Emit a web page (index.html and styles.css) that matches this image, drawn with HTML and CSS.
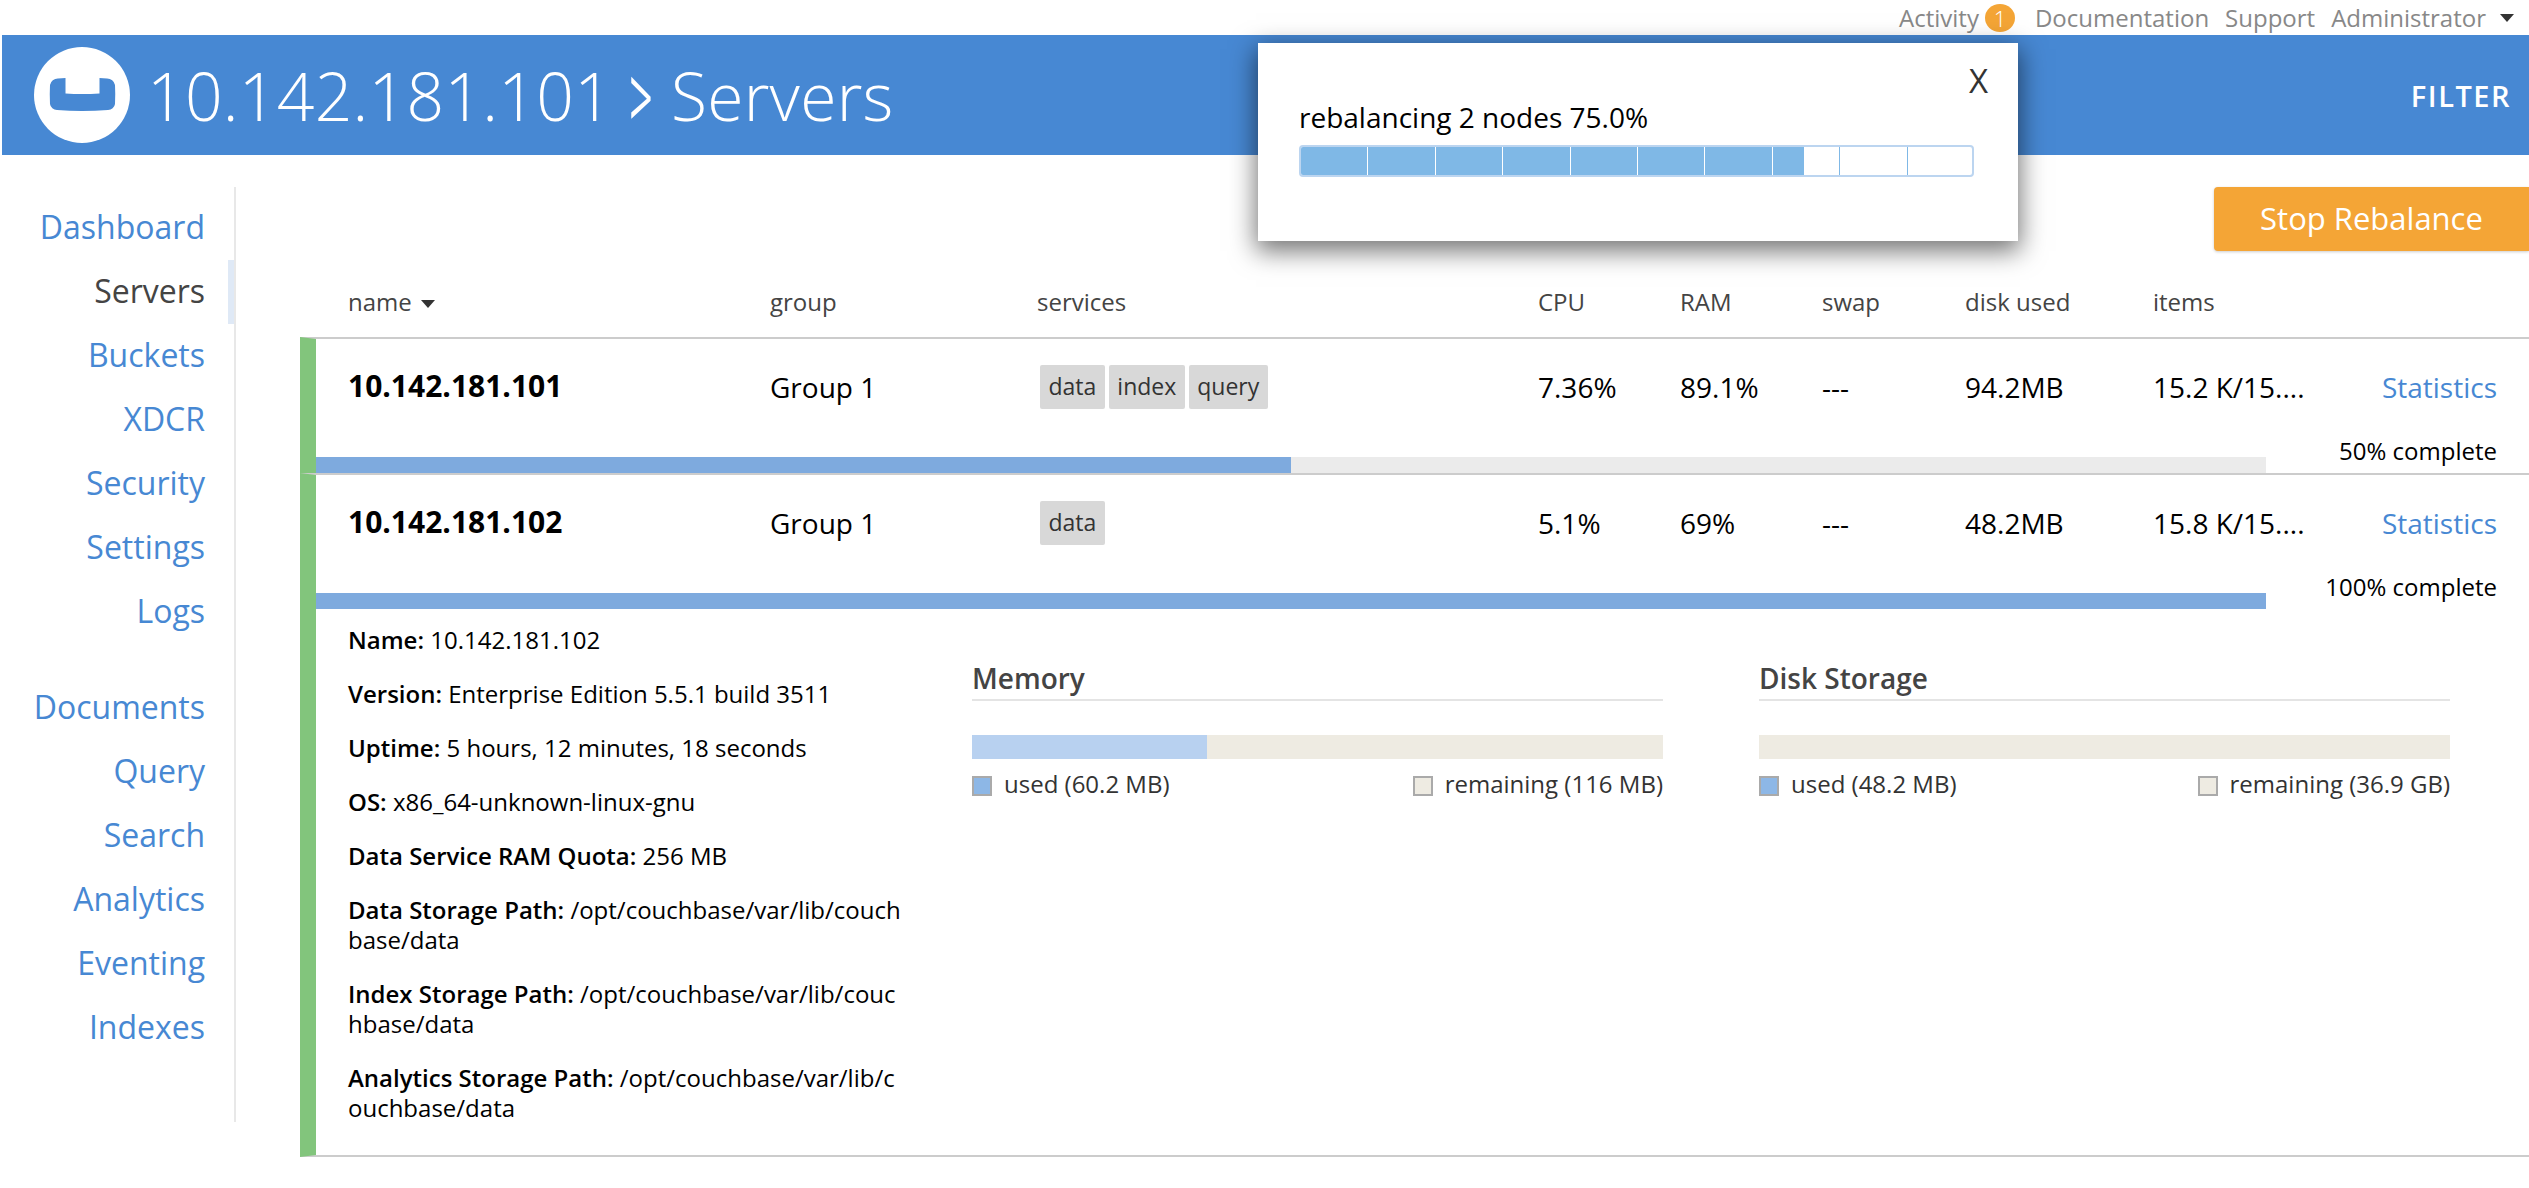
FILE: index.html
```html
<!DOCTYPE html>
<html lang="en">
<head>
    <meta charset="UTF-8">
    <meta name="viewport" content="width=device-width, initial-scale=1.0">
    <title>Servers</title>
    <link rel="stylesheet" href="styles.css">
</head>
<body>
    <div class="topbar">
        <span class="topbar-link">Activity</span>
        <span class="badge">1</span>
        <span class="topbar-link doc-link">Documentation</span>
        <span class="topbar-link">Support</span>
        <span class="topbar-link">Administrator</span>
        <span class="caret caret-top"></span>
    </div>

    <header class="header">
        <div class="logo">
            <svg width="67" height="34" viewBox="-1 0 67 34">
                <path fill="#4788d3" d="M8 .5Q12 0 15.5 0V15.6Q32 16.6 49.5 15.6V0Q53 0 57 .5A8 8 0 0 1 65 7Q65.5 16 65 26A7 7 0 0 1 58 32Q32 34 7 32A7 7 0 0 1 0 26Q-.5 16 0 7A8 8 0 0 1 8 .5Z"/>
            </svg>
        </div>
        <h1 class="title">10.142.181.101 <span class="crumb-sep">&gt;</span> Servers</h1>
        <span class="filter">FILTER</span>
    </header>

    <div class="page">
        <nav class="sidebar">
            <a class="nav-item">Dashboard</a>
            <a class="nav-item active">Servers</a>
            <a class="nav-item">Buckets</a>
            <a class="nav-item">XDCR</a>
            <a class="nav-item">Security</a>
            <a class="nav-item">Settings</a>
            <a class="nav-item">Logs</a>
            <a class="nav-item nav-group">Documents</a>
            <a class="nav-item">Query</a>
            <a class="nav-item">Search</a>
            <a class="nav-item">Analytics</a>
            <a class="nav-item">Eventing</a>
            <a class="nav-item">Indexes</a>
        </nav>

        <main class="main">
            <div class="toolbar">
                <button class="stop-btn">Stop Rebalance</button>
            </div>

            <div class="columns table-head">
                <span>name <span class="caret caret-sort"></span></span>
                <span>group</span>
                <span>services</span>
                <span>CPU</span>
                <span>RAM</span>
                <span>swap</span>
                <span>disk used</span>
                <span>items</span>
            </div>

            <section class="server">
                <div class="columns server-row">
                    <strong class="server-name">10.142.181.101</strong>
                    <span>Group 1</span>
                    <span class="tags"><span class="tag">data</span><span class="tag">index</span><span class="tag">query</span></span>
                    <span>7.36%</span>
                    <span>89.1%</span>
                    <span>---</span>
                    <span>94.2MB</span>
                    <span>15.2 K/15....</span>
                    <a class="stats-link">Statistics</a>
                </div>
                <div class="progress-row">
                    <div class="progress"><div class="progress-fill" style="width: 50%"></div></div>
                    <span class="progress-label">50% complete</span>
                </div>
            </section>

            <section class="server server-last">
                <div class="columns server-row">
                    <strong class="server-name">10.142.181.102</strong>
                    <span>Group 1</span>
                    <span class="tags"><span class="tag">data</span></span>
                    <span>5.1%</span>
                    <span>69%</span>
                    <span>---</span>
                    <span>48.2MB</span>
                    <span>15.8 K/15....</span>
                    <a class="stats-link">Statistics</a>
                </div>
                <div class="progress-row">
                    <div class="progress"><div class="progress-fill" style="width: 100%"></div></div>
                    <span class="progress-label">100% complete</span>
                </div>

                <div class="details">
                    <div class="info">
                        <p><b>Name:</b> 10.142.181.102</p>
                        <p><b>Version:</b> Enterprise Edition 5.5.1 build 3511</p>
                        <p><b>Uptime:</b> 5 hours, 12 minutes, 18 seconds</p>
                        <p><b>OS:</b> x86_64-unknown-linux-gnu</p>
                        <p><b>Data Service RAM Quota:</b> 256 MB</p>
                        <p><b>Data Storage Path:</b> /opt/couchbase/var/lib/couchbase/data</p>
                        <p><b>Index Storage Path:</b> /opt/couchbase/var/lib/couchbase/data</p>
                        <p><b>Analytics Storage Path:</b> /opt/couchbase/var/lib/couchbase/data</p>
                    </div>

                    <div class="usage usage-memory">
                        <h3 class="usage-title">Memory</h3>
                        <div class="usage-bar"><div class="usage-fill" style="width: 34%"></div></div>
                        <div class="legend">
                            <span><i class="swatch swatch-used"></i>used (60.2 MB)</span>
                            <span><i class="swatch swatch-free"></i>remaining (116 MB)</span>
                        </div>
                    </div>

                    <div class="usage usage-disk">
                        <h3 class="usage-title">Disk Storage</h3>
                        <div class="usage-bar"></div>
                        <div class="legend">
                            <span><i class="swatch swatch-used"></i>used (48.2 MB)</span>
                            <span><i class="swatch swatch-free"></i>remaining (36.9 GB)</span>
                        </div>
                    </div>
                </div>
            </section>
        </main>
    </div>

    <div class="rebalance-popup">
        <span class="popup-close">X</span>
        <div class="popup-text">rebalancing 2 nodes 75.0%</div>
        <div class="popup-bar">
            <div class="popup-fill" style="width: 75%"></div>
        </div>
    </div>
</body>
</html>
```

FILE: styles.css
```css
* {
    box-sizing: border-box;
}
body {
    margin: 0;
    font-family: "Open Sans", "DejaVu Sans", sans-serif;
    font-size: 24px;
    color: #000;
    background-color: #fff;
    overflow: hidden;
}

/* top links */
.topbar {
    height: 35px;
    display: flex;
    align-items: center;
    justify-content: flex-end;
    padding-right: 15px;
    color: #888;
    font-size: 24px;
}
.topbar-link {
    margin-left: 16px;
}
.doc-link {
    margin-left: 20px;
}
.badge {
    width: 30px;
    height: 28px;
    margin-left: 6px;
    border-radius: 50%;
    background-color: #f4a536;
    color: #fff;
    font-size: 22px;
    font-weight: 300;
    line-height: 28px;
    text-align: center;
}
.caret {
    display: inline-block;
    width: 0;
    height: 0;
    border-left: 7px solid transparent;
    border-right: 7px solid transparent;
    border-top: 8px solid #333;
}
.caret-top {
    margin-left: 14px;
}
.caret-sort {
    margin-left: 3px;
    vertical-align: 3px;
}

/* blue header */
.header {
    height: 120px;
    margin-left: 2px;
    padding: 0 18px 0 32px;
    display: flex;
    align-items: center;
    background-color: #4788d3;
    color: #fff;
}
.logo {
    width: 96px;
    height: 96px;
    border-radius: 50%;
    background-color: #fff;
    display: flex;
    align-items: center;
    justify-content: center;
    flex-shrink: 0;
}
.title {
    margin: 0 0 0 17px;
    font-size: 66px;
    font-weight: 300;
    letter-spacing: 0.25px;
    flex: 1;
}
.crumb-sep {
    display: inline-block;
    margin: 0 -7px;
    font-weight: 400;
    transform: scale(0.62, 1.3);
}
.filter {
    font-size: 29px;
    font-weight: 600;
    letter-spacing: 1.5px;
}

/* layout */
.page {
    display: flex;
}
.sidebar {
    width: 236px;
    height: 935px;
    margin-top: 32px;
    padding-top: 9px;
    border-right: 2px solid #e8e8e8;
    flex-shrink: 0;
}
.nav-item {
    display: block;
    height: 64px;
    line-height: 62px;
    padding-right: 29px;
    text-align: right;
    font-size: 32px;
    color: #4788d3;
}
.nav-item.active {
    color: #444;
    padding-right: 23px;
    border-right: 6px solid #dfe9f6;
}
.nav-group {
    margin-top: 32px;
}
.main {
    flex: 1;
    min-width: 0;
    padding-left: 64px;
}
.toolbar {
    display: flex;
    justify-content: flex-end;
    padding-top: 32px;
}
.stop-btn {
    width: 315px;
    height: 64px;
    padding: 0 0 3px;
    border: none;
    border-radius: 4px 0 0 4px;
    background-color: #f4a536;
    color: #fff;
    font-family: inherit;
    font-size: 31px;
    box-shadow: 0 1px 3px rgba(0, 0, 0, 0.2);
}

/* server table */
.columns {
    display: grid;
    grid-template-columns: 422px 267px 501px 142px 142px 143px 188px 210px 1fr;
    align-items: center;
    padding: 0 32px 0 48px;
}
.table-head {
    height: 86px;
    padding-top: 14px;
    color: #444;
    font-size: 24px;
}
.server {
    border-top: 2px solid #ccc;
    border-left: 16px solid #82c57c;
}
.server-last {
    border-bottom: 2px solid #ccc;
}
.server-row {
    height: 96px;
    padding-left: 32px;
    font-size: 28px;
}
.server-name {
    padding-bottom: 3px;
    font-size: 30px;
    font-weight: 700;
}
.tags {
    display: flex;
    gap: 4px;
    padding-left: 3px;
}
.tag {
    height: 44px;
    padding: 0 8.5px;
    border-radius: 2px;
    background-color: #d8d8d8;
    color: #333;
    font-size: 23px;
    line-height: 42px;
}
.stats-link {
    color: #4788d3;
    font-size: 28px;
    text-align: right;
    white-space: nowrap;
}
.progress-row {
    height: 38px;
    display: flex;
    justify-content: space-between;
    align-items: flex-end;
    padding-right: 32px;
}
.progress {
    width: 1950px;
    height: 16px;
    background-color: #ebebeb;
}
.progress-fill {
    height: 100%;
    background-color: #7eaade;
}
.progress-label {
    line-height: 34px;
    margin-bottom: 5px;
    font-size: 24px;
}

/* expanded server */
.details {
    display: flex;
    padding: 16px 0 8px 32px;
}
.info {
    width: 556px;
    flex-shrink: 0;
    word-break: break-all;
    font-size: 24px;
    line-height: 30px;
}
.info p {
    margin: 0 0 24px;
}
.info b {
    font-weight: 600;
}
.usage {
    width: 691px;
    flex-shrink: 0;
    padding-top: 32px;
}
.usage-memory {
    margin-left: 68px;
}
.usage-disk {
    margin-left: 96px;
}
.usage-title {
    margin: 0;
    height: 44px;
    border-bottom: 2px solid #e4e4e4;
    color: #444;
    font-size: 28px;
    font-weight: 600;
    line-height: 42px;
}
.usage-bar {
    height: 24px;
    margin-top: 34px;
    background-color: #eeebe2;
}
.usage-fill {
    height: 100%;
    background-color: #b8d1f0;
}
.legend {
    display: flex;
    justify-content: space-between;
    margin-top: 9px;
    color: #333;
    font-size: 24px;
    line-height: 32px;
}
.swatch {
    display: inline-block;
    width: 20px;
    height: 20px;
    margin-right: 12px;
    border: 2px solid #aaa;
    vertical-align: -3px;
}
.swatch-used {
    background-color: #8db7e6;
}
.swatch-free {
    background-color: #eeebe2;
}

/* popup floats over the header */
.rebalance-popup {
    position: absolute;
    top: 43px;
    left: 1258px;
    width: 760px;
    height: 198px;
    padding: 56px 44px 0 41px;
    background-color: #fff;
    box-shadow: 0 8px 24px 2px rgba(0, 0, 0, 0.55);
}
.popup-close {
    position: absolute;
    top: 15px;
    right: 30px;
    color: #333;
    font-size: 33px;
}
.popup-text {
    font-size: 28px;
    line-height: 36px;
}
.popup-bar {
    height: 32px;
    margin-top: 10px;
    border: 2px solid #bcd5f0;
    border-radius: 4px;
    background-image: repeating-linear-gradient(to right, transparent 0, transparent 66.4px, #7fb8e6 66.4px, #7fb8e6 67.4px);
    overflow: hidden;
}
.popup-fill {
    height: 100%;
    background-color: #7fb8e6;
    background-image: repeating-linear-gradient(to right, transparent 0, transparent 66.4px, #fff 66.4px, #fff 67.4px);
}
```
